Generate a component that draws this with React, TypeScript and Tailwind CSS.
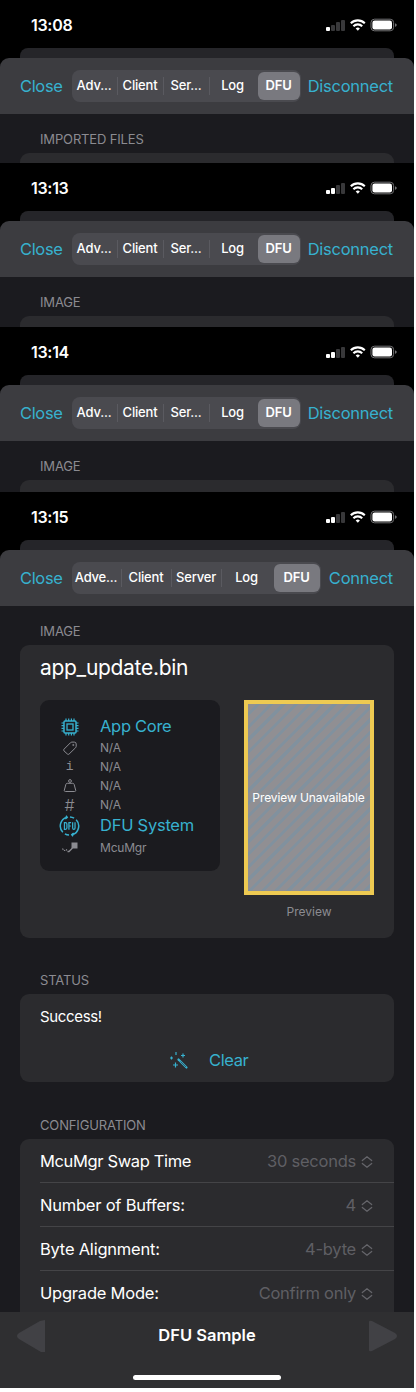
import React from 'react';

function Status({ time, bars }: { time: string; bars: number }) {
  const hs = [4, 6, 9, 11];
  return (
    <div className="flex h-[48px] shrink-0 items-center pl-[31px] pr-[16px] text-white">
      <span className="pt-px text-[16px] font-semibold leading-[20px] tracking-[-0.3px]">{time}</span>
      <svg className="ml-auto mt-px" width="72" height="14" viewBox="0 0 72 14">
        {hs.map((h, i) => (
          <rect key={i} x={i * 5} y={13 - h} width="4" height={h} rx="1" fill={i < bars ? '#fff' : '#38383a'} />
        ))}
        <g fill="none" stroke="#fff" strokeWidth="2.1">
          <path d="M24.800 5.200a10 10 0 0 1 14 0" />
          <path d="M27.400 8.200a6.200 6.200 0 0 1 8.800 0" />
        </g>
        <path d="M31.800 12.800l-2.100-2.200a3 3 0 0 1 4.200 0z" fill="#fff" />
        <rect x="45" y="1.200" width="22.600" height="11.600" rx="3.400" fill="none" stroke="#727274" />
        <rect x="46.400" y="2.600" width="19.600" height="8.800" rx="2.200" fill="#fff" />
        <path d="M69 5.200v3.600c1.200-.5 1.700-1.200 1.700-1.800s-.5-1.300-1.700-1.800z" fill="#727274" />
      </svg>
    </div>
  );
}

function NavBar({ wide }: { wide?: boolean }) {
  const labels = wide ? ['Adve...', 'Client', 'Server', 'Log'] : ['Adv...', 'Client', 'Ser...', 'Log'];
  return (
    <>
      <div className="mx-[20px] h-[10px] shrink-0 rounded-t-[8px] bg-[#252529]" />
      <div className="flex h-[56px] shrink-0 items-center rounded-t-[9px] bg-[#3c3c40] pl-[20px] pr-[21px]">
        <span className="w-[52px] text-[16.5px] tracking-[-0.35px] text-[#37b1cf]">Close</span>
        <div className={`flex h-[32px] items-center rounded-[8px] bg-[#4a4a4f] text-[13px] font-medium tracking-[-0.2px] text-white ${wide ? 'w-[249px]' : 'w-[229px]'}`}>
          {labels.map((l, i) => (
            <div
              key={l}
              className={`flex h-[18px] items-center justify-center pr-px ${wide ? 'w-[50px]' : 'w-[46px]'} ${i < 3 ? 'border-r border-[#5a5a60]' : ''}`}
            >
              {l}
            </div>
          ))}
          <div className={`ml-[2px] flex h-[28px] items-center justify-center rounded-[6px] bg-[#79797f] pr-px font-semibold ${wide ? 'w-[46px]' : 'w-[42px]'}`}>
            DFU
          </div>
        </div>
        <span className="ml-auto text-[16.5px] tracking-[-0.25px] text-[#37b1cf]">{wide ? 'Connect' : 'Disconnect'}</span>
      </div>
    </>
  );
}

function Heading({ children, className }: { children: React.ReactNode; className: string }) {
  return <h2 className={`pl-[20px] text-[13px] leading-[18px] tracking-[-0.15px] text-[#8b8b91] ${className}`}>{children}</h2>;
}

function Strip({ time, bars, title, height }: { time: string; bars: number; title: string; height: string }) {
  return (
    <section className={`flex shrink-0 flex-col overflow-hidden bg-black ${height}`}>
      <Status time={time} bars={bars} />
      <NavBar />
      <div className="min-h-0 flex-1 overflow-hidden bg-[#1b1b1f] px-[20px]">
        <Heading className="pt-[16px]">{title}</Heading>
        <div className="mt-[5px] h-[40px] rounded-[9px] bg-[#2b2b2e]" />
      </div>
    </section>
  );
}

function Chip() {
  return (
    <svg width="18" height="18" viewBox="0 0 18 18" fill="none" stroke="#37b1cf">
      <rect x="3" y="3" width="12" height="12" rx="1" strokeWidth="1.500" />
      <rect x="6" y="6" width="6" height="6" strokeWidth="1.300" />
      <path d="M5 .5V3M7.700.5V3M10.400.5V3M13 .5V3M5 15v2.500M7.700 15v2.500M10.400 15v2.500M13 15v2.500M.5 5H3M.5 7.700H3M.5 10.400H3M.5 13H3M15 5h2.500M15 7.700h2.500M15 10.400h2.500M15 13h2.500" strokeWidth="1.200" />
    </svg>
  );
}

function Tag() {
  return (
    <svg width="14" height="14" viewBox="0 0 14 14" fill="none" stroke="#8b8b91">
      <path d="M1 8.200 7.400 1.800a2.200 2.200 0 0 1 1.500-.7h2.400a1.900 1.900 0 0 1 1.900 1.900v2.300a2.200 2.200 0 0 1-.7 1.500L6.100 13a1.200 1.200 0 0 1-1.700 0L1 9.900a1.200 1.200 0 0 1 0-1.700z" />
      <circle cx="10.300" cy="4" r=".6" />
    </svg>
  );
}

function Weight() {
  return (
    <svg width="14" height="14" viewBox="0 0 14 14" fill="none" stroke="#8b8b91">
      <circle cx="7" cy="2" r="1.400" />
      <path d="M4.300 4.300h5.400a1.500 1.500 0 0 1 1.400 1l1.600 5.900c.2.800-.3 1.300-1 1.300H2.300c-.7 0-1.200-.5-1-1.300l1.600-5.900a1.500 1.500 0 0 1 1.400-1z" />
    </svg>
  );
}

function DfuIcon() {
  return (
    <svg width="22" height="22" viewBox="0 0 22 22" fill="none" stroke="#37b1cf">
      <path d="M8.300 1.800A9.500 9.500 0 0 0 4 17.500M7.300.2l1.300 1.800-2 1.500M13.700 20.200A9.500 9.500 0 0 0 18 4.500M14.700 21.800l-1.300-1.800 2-1.500M11.500 1.500a9.500 9.500 0 0 1 4.300 1.300M10.500 20.500a9.500 9.500 0 0 1-4.300-1.300" strokeWidth="1.600" />
      <path d="M5.700 7.500v7h1.100c1 0 1.500-.6 1.500-1.600V9.100c0-1-.5-1.600-1.500-1.600zM10.400 15V7.500h2.300M10.400 11h2M14.300 7v6c0 2 2.500 2 2.500 0V7" strokeWidth="1.300" />
    </svg>
  );
}

function McuIcon() {
  return (
    <svg width="16" height="12" viewBox="0 0 16 12">
      <path d="M9.500.5h6v6h-6z" fill="#8b8b91" />
      <path d="M.5 6.500c1.200 2.500 2.800 2.500 4.500 1" fill="none" stroke="#8b8b91" strokeWidth="1.200" strokeDasharray="1.500 .8" />
      <path d="M5.500 9.500h1.500l3.500-3.500" fill="none" stroke="#8b8b91" strokeWidth="1.300" />
    </svg>
  );
}

function Wand() {
  return (
    <svg width="20" height="20" viewBox="0 0 20 20" fill="none" stroke="#37b1cf">
      <path d="M9.500 9.500l8 8" strokeWidth="2.200" strokeLinecap="round" />
      <path d="M11.500 11.500l5.500 5.500" stroke="#2b2b2e" strokeWidth=".6" />
      <path d="M7 2v3M14 3.500v4M12 5.500h4M6.500 12.500v5M4 15h5M2.500 6.500v3M1 8h3" strokeWidth="1.200" />
    </svg>
  );
}

function Updown() {
  return (
    <svg width="12" height="14" viewBox="0 0 12 14" fill="none" stroke="#66666b" strokeWidth="1.200" strokeLinecap="round" strokeLinejoin="round">
      <path d="M1.300 5.500 6 1.700l4.700 3.800M1.300 8.500 6 12.300l4.700-3.800" />
    </svg>
  );
}

function InfoRow({ icon, label, height }: { icon: React.ReactNode; label: string; height: string }) {
  return (
    <div className={`flex items-center text-[12px] tracking-[-0.2px] text-[#8b8b91] ${height}`}>
      <span className="flex w-[21px] justify-center">{icon}</span>
      <span className="ml-[20px]">{label}</span>
    </div>
  );
}

const settings = [
  ['McuMgr Swap Time', '30 seconds'],
  ['Number of Buffers:', '4'],
  ['Byte Alignment:', '4-byte'],
  ['Upgrade Mode:', 'Confirm only'],
];

export default function App() {
  return (
    <div className="h-[1392px] w-[416px] bg-white">
      <main className="flex h-[1388px] w-[414px] flex-col overflow-hidden bg-black font-['Inter',sans-serif]">
        <Strip time="13:08" bars={1} title="IMPORTED FILES" height="h-[163px]" />
        <Strip time="13:13" bars={2} title="IMAGE" height="h-[164px]" />
        <Strip time="13:14" bars={2} title="IMAGE" height="h-[165px]" />
        <section className="flex h-[820px] shrink-0 flex-col overflow-hidden">
          <Status time="13:15" bars={2} />
          <NavBar wide />
          <div className="min-h-0 flex-1 overflow-hidden bg-[#1b1b1f] px-[20px]">
            <Heading className="pt-[16px]">IMAGE</Heading>
            <div className="mt-[5px] h-[293px] rounded-[9px] bg-[#2b2b2e] px-[20px]">
              <h1 className="pt-[8px] text-[21px] leading-[30px] tracking-[-0.3px] text-white">app_update.bin</h1>
              <div className="mt-[17px] flex justify-between">
                <div className="h-[171px] w-[180px] rounded-[9px] bg-[#1b1b1f] pl-[19px] pt-[16px]">
                  <div className="flex h-[21px] items-center text-[16.5px] tracking-[-0.3px] text-[#37b1cf]">
                    <span className="flex w-[21px] justify-center"><Chip /></span>
                    <span className="ml-[20px]">App Core</span>
                  </div>
                  <InfoRow icon={<Tag />} label="N/A" height="h-[21px]" />
                  <InfoRow icon={<span className="font-['Liberation_Mono',monospace] text-[13px]">i</span>} label="N/A" height="h-[18px]" />
                  <InfoRow icon={<Weight />} label="N/A" height="h-[19px]" />
                  <InfoRow icon={<span className="text-[16px] font-light">#</span>} label="N/A" height="h-[19px]" />
                  <div className="flex h-[23px] items-center text-[16.5px] tracking-[-0.25px] text-[#37b1cf]">
                    <span className="flex w-[21px] justify-center"><DfuIcon /></span>
                    <span className="ml-[20px]">DFU System</span>
                  </div>
                  <InfoRow icon={<McuIcon />} label="McuMgr" height="h-[21px]" />
                </div>
                <div className="w-[130px]">
                  <div className="flex h-[195px] items-center justify-center whitespace-nowrap border-4 border-[#eeca52] bg-[#8f8e92] bg-[image:repeating-linear-gradient(135deg,#908f93_0px,#908f93_6px,#81919e_6px,#81919e_9px)] pr-px text-[12px] tracking-[-0.1px] text-white">
                    Preview Unavailable
                  </div>
                  <div className="mt-[8px] text-center text-[12px] leading-[18px] text-[#8b8b91]">Preview</div>
                </div>
              </div>
            </div>
            <Heading className="pt-[33px]">STATUS</Heading>
            <div className="mt-[5px] h-[88px] rounded-[9px] bg-[#2b2b2e]">
              <div className="flex h-[44px] items-center pl-[20px] pt-[2px] text-[15px] tracking-[-0.35px] text-white">Success!</div>
              <div className="flex h-[44px] items-center pl-[149px] text-[16.5px] tracking-[-0.4px] text-[#37b1cf]">
                <Wand />
                <span className="ml-[20px]">Clear</span>
              </div>
            </div>
            <Heading className="pt-[34px]">CONFIGURATION</Heading>
            <div className="mt-[5px] h-[200px] rounded-t-[9px] bg-[#2b2b2e] pl-[20px]">
              {settings.map(([k, v], i) => (
                <div key={k} className={`flex h-[44px] items-center border-b border-[#444447] pr-[21px] pt-[2px] text-[16.5px] ${i === 0 ? 'tracking-[-0.36px]' : 'tracking-[-0.22px]'}`}>
                  <span className="text-white">{k}</span>
                  <span className="ml-auto mr-[5px] tracking-[-0.25px] text-[#5f5f64]">{v}</span>
                  <Updown />
                </div>
              ))}
            </div>
          </div>
        </section>
        <footer className="flex h-[76px] shrink-0 flex-col items-center bg-[#2f2f31]">
          <div className="flex h-[48px] w-full items-center justify-between px-[17px]">
            <svg width="28" height="32" viewBox="0 0 28 32"><path d="M28 0v32h-4L2 19q-4-3 0-6L23 1z" fill="#414145" /></svg>
            <span className="pb-px text-[16.5px] font-semibold text-white">DFU Sample</span>
            <svg width="28" height="32" viewBox="0 0 28 32"><path d="M0 2q0-2 3-1l23 12q4 3 0 6L3 31q-3 1-3-1z" fill="#414145" /></svg>
          </div>
          <div className="mt-[15px] h-[5px] w-[148px] rounded-full bg-white" />
        </footer>
      </main>
    </div>
  );
}
